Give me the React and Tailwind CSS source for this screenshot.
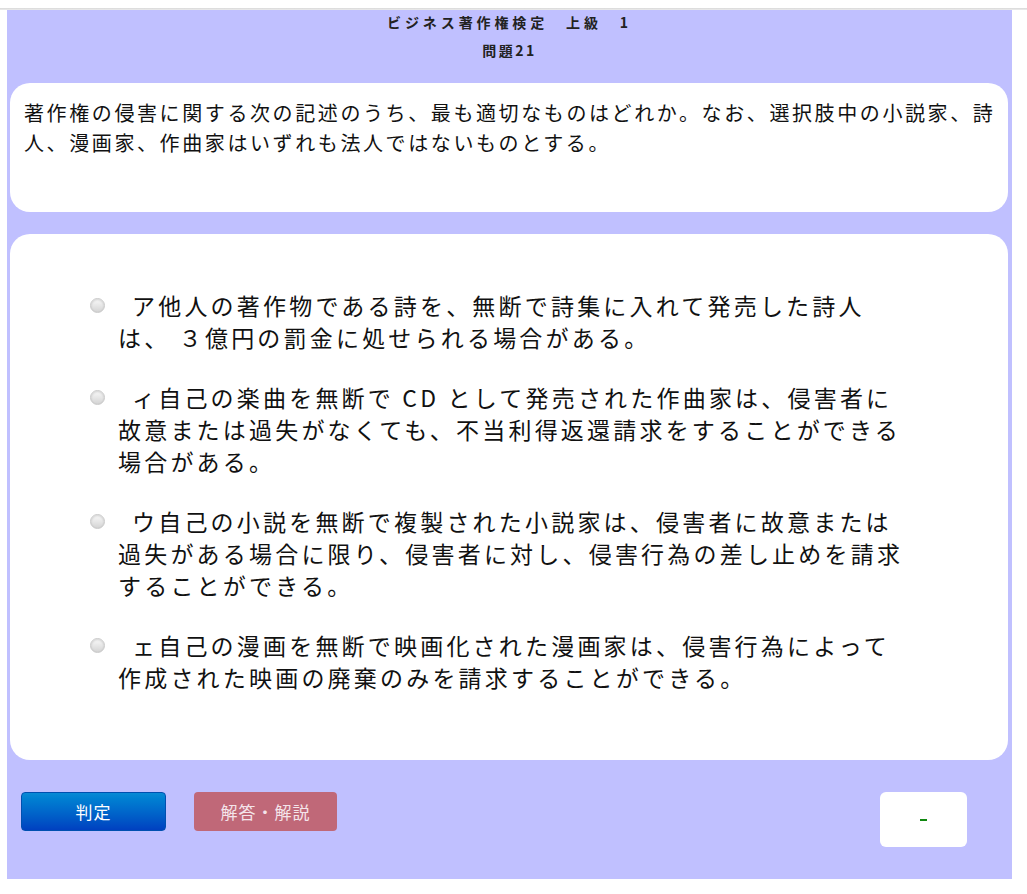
import React from 'react'

const FONT = { fontFamily: '"Noto Sans CJK JP", "Noto Sans", sans-serif' }

const OPTIONS = [
  {
    id: 'a',
    lines: ['ア他人の著作物である詩を、無断で詩集に入れて発売した詩人', 'は、 ３億円の罰金に処せられる場合がある。'],
  },
  {
    id: 'i',
    lines: [
      'ィ自己の楽曲を無断で CD として発売された作曲家は、侵害者に',
      '故意または過失がなくても、不当利得返還請求をすることができる',
      '場合がある。',
    ],
  },
  {
    id: 'u',
    lines: [
      'ウ自己の小説を無断で複製された小説家は、侵害者に故意または',
      '過失がある場合に限り、侵害者に対し、侵害行為の差し止めを請求',
      'することができる。',
    ],
  },
  {
    id: 'e',
    lines: ['ェ自己の漫画を無断で映画化された漫画家は、侵害行為によって', '作成された映画の廃棄のみを請求することができる。'],
  },
]

function Radio() {
  return (
    <span className="mt-[9px] block h-[15px] w-[15px] shrink-0 rounded-full border border-[#c8c8c8] bg-gradient-to-b from-[#fafafa] to-[#d4d4d4] shadow-[inset_0_1px_2px_rgba(0,0,0,0.15)]" />
  )
}

function Option({ lines }) {
  return (
    <label className="flex items-start">
      <Radio />
      <div className="ml-[13px] whitespace-nowrap text-[23px] leading-[32px] tracking-[3.2px] text-[#111]">
        {lines.map((line, i) => (
          <div key={i} className={i === 0 ? 'pl-[14px]' : ''}>
            {line}
          </div>
        ))}
      </div>
    </label>
  )
}

export default function App() {
  return (
    <div className="min-h-[894px] bg-white" style={FONT}>
      <div className="pt-[8px]">
        <div className="h-[2px] bg-gradient-to-b from-[#d8d8d8] to-[#ececec]" />
      </div>

      <div className="ml-[7px] flex h-[869px] w-[1005px] flex-col bg-[#c0c0ff]">
        {/* Header */}
        <div className="flex flex-col items-center pt-[2px] text-[14px] font-bold text-[#222]">
          <div className="leading-[20px] tracking-[3.9px]">ビジネス著作権検定　上級　1</div>
          <div className="mt-[8px] leading-[20px] tracking-[2.5px]">問題21</div>
        </div>

        {/* Question */}
        <div className="ml-[3px] mt-[23px] h-[129px] w-[998px] rounded-[20px] bg-white pl-[14px] pt-[15px]">
          <p className="whitespace-nowrap text-[20px] leading-[30px] tracking-[2.6px] text-[#111]">
            著作権の侵害に関する次の記述のうち、最も適切なものはどれか。なお、選択肢中の小説家、詩
            <br />
            人、漫画家、作曲家はいずれも法人ではないものとする。
          </p>
        </div>

        {/* Options */}
        <div className="ml-[3px] mt-[22px] h-[526px] w-[998px] rounded-[20px] bg-white pl-[80px] pt-[55px]">
          <div className="flex flex-col gap-[28px]">
            {OPTIONS.map(o => (
              <Option key={o.id} lines={o.lines} />
            ))}
          </div>
        </div>

        {/* Actions */}
        <div className="mt-[32px] flex items-start pl-[14px]">
          <button className="h-[39px] w-[145px] rounded-[4px] border border-[#0050b0] bg-gradient-to-b from-[#0a8ad4] to-[#0040c0] text-[17px] tracking-[1px] text-white">
            判定
          </button>
          <button className="ml-[28px] h-[39px] w-[143px] rounded-[4px] bg-[#c06878] text-[17px] tracking-[1px] text-[#f4e4ea]">
            解答・解説
          </button>
          <div className="ml-auto mr-[45px] flex h-[55px] w-[87px] items-center justify-center rounded-[6px] bg-white">
            <span className="block h-[2px] w-[7px] bg-[#108810]" />
          </div>
        </div>
      </div>
    </div>
  )
}
